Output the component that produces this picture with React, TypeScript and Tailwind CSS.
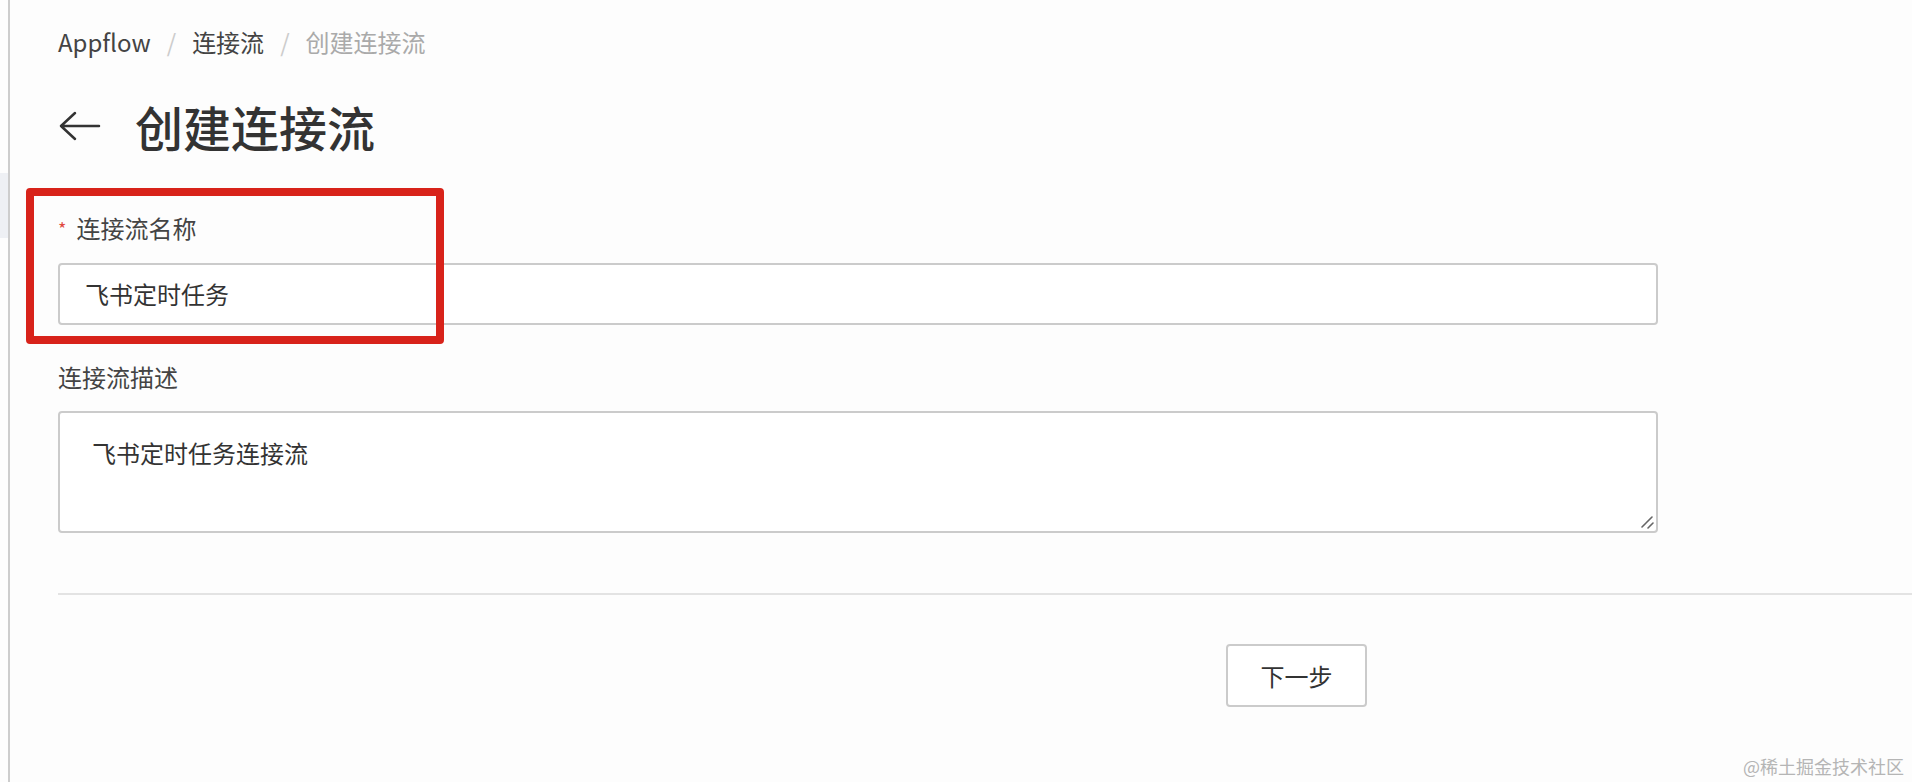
export default function App() {
  return (
    <div
      className="relative flex h-[782px] w-full overflow-hidden bg-[#fdfdfd] text-[#333]"
      style={{ fontFamily: '"Noto Sans CJK SC", "Noto Sans", sans-serif' }}
    >
      {/* Sidebar edge */}
      <div className="flex w-[8px] flex-col">
        <div className="mt-[173px] h-[65px] bg-[#eef0f4]" />
      </div>
      <div className="w-[2px] bg-[#cdcdcd]" />

      {/* Main */}
      <div className="flex flex-1 flex-col pl-[48px]">
        {/* Breadcrumb */}
        <div className="flex items-center gap-[16px] pt-[26px] text-[24px] leading-[32px]">
          <span className="text-[#444]">Appflow</span>
          <span className="text-[#ccc]">/</span>
          <span className="text-[#444]">连接流</span>
          <span className="text-[#ccc]">/</span>
          <span className="text-[#aaa]">创建连接流</span>
        </div>

        {/* Title */}
        <div className="mt-[40px] flex h-[56px] items-center">
          <svg width="42" height="30" viewBox="0 0 42 30" fill="none" className="ml-[1px]">
            <path d="M2 15H40M16 2L2 15L16 28" stroke="#333" strokeWidth="2.5" strokeLinecap="round" strokeLinejoin="round" />
          </svg>
          <h1 className="ml-[34px] text-[48px] font-medium leading-[56px] text-[#333]">创建连接流</h1>
        </div>

        {/* Form */}
        <div className="w-[1600px]">
          <div className="mt-[58px] flex items-center text-[24px] leading-[32px] text-[#444]">
            <span className="mr-[10px] text-[18px] text-[#e04a3f]">*</span>
            连接流名称
          </div>
          <div className="mt-[19px] flex h-[62px] items-center rounded-[4px] border-2 border-[#cbcbcb] bg-white pl-[25px] text-[24px] text-[#333]">
            飞书定时任务
          </div>

          <div className="mt-[36px] text-[24px] leading-[32px] text-[#444]">连接流描述</div>
          <div className="relative mt-[18px] h-[122px] rounded-[4px] border-2 border-[#cbcbcb] bg-white pl-[32px] pt-[24px] text-[24px] leading-[32px] text-[#333]">
            飞书定时任务连接流
            <svg width="14" height="14" viewBox="0 0 14 14" className="absolute bottom-[2px] right-[2px]">
              <path d="M2 12L12 2M8 13L13 8" stroke="#666" strokeWidth="1.6" strokeLinecap="round" />
            </svg>
          </div>
        </div>

        <div className="mt-[60px] h-[2px] bg-[#e3e3e3]" />

        <div className="mt-[49px] flex">
          <button className="ml-[1168px] flex h-[63px] w-[141px] items-center justify-center rounded-[4px] border-2 border-[#cbcbcb] bg-white text-[24px] text-[#333]">
            下一步
          </button>
        </div>
      </div>

      {/* Annotation box */}
      <div className="pointer-events-none absolute left-[26px] top-[188px] h-[156px] w-[418px] rounded-[4px] border-[8px] border-[#d8231a]" />

      {/* Watermark */}
      <div className="absolute bottom-[4px] right-[8px] text-[18px] leading-[24px] text-[#b5b5b5]">@稀土掘金技术社区</div>
    </div>
  )
}
